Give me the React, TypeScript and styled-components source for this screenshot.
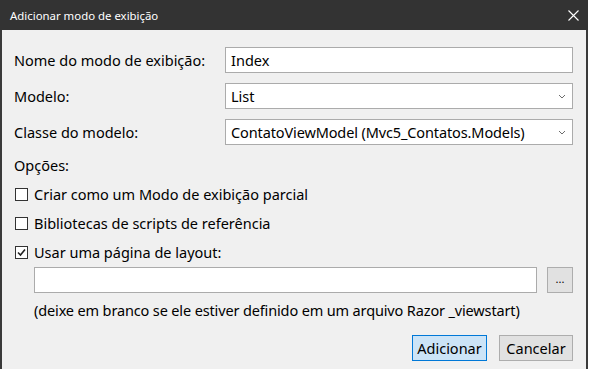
import * as React from 'react';
import styled, { createGlobalStyle } from 'styled-components';

const GlobalStyle = createGlobalStyle`
  html, body {
    margin: 0;
    padding: 0;
    background: #ffffff;
  }
  body {
    font-family: "Noto Sans", "Open Sans", sans-serif;
  }
`

const Window = styled.div`
  width: 588px;
  height: 369px;
  display: flex;
  flex-direction: column;
  background: #f0f0f0;
  box-sizing: border-box;
  overflow: hidden;
`

const TitleBar = styled.div`
  height: 30px;
  flex: 0 0 30px;
  width: 590px;
  background: #333333;
  display: flex;
  align-items: center;
  justify-content: space-between;
  padding: 0 11px 0 10px;
  box-sizing: border-box;
  color: #ffffff;
  font-size: 11.4px;
`

const Body = styled.div`
  flex: 1;
  border-left: 2px solid #3a3a3a;
  border-right: 2px solid #3a3a3a;
  padding: 17px 13px 0 12px;
  display: flex;
  flex-direction: column;
  font-size: 14.5px;
  color: #000000;
`

const FormGrid = styled.div`
  display: grid;
  grid-template-columns: 211px 1fr;
  row-gap: 10px;
  align-items: center;
`

const Label = styled.div`
  line-height: 20px;
`

const Field = styled.div<{ $tight?: boolean }>`
  height: 26px;
  box-sizing: border-box;
  border: 1px solid #ababab;
  background: #ffffff;
  display: flex;
  align-items: center;
  justify-content: space-between;
  padding: 0 6px 0 5px;
  letter-spacing: ${p => (p.$tight ? '-0.12px' : 'normal')};
`

const Chevron = () => (
  <svg width="8" height="5" viewBox="0 0 8 5">
    <path d="M1 1 L4 4 L7 1" fill="none" stroke="#6d6d6d" strokeWidth="1" />
  </svg>
)

const Section = styled.div`
  margin-top: 10px;
  line-height: 20px;
`

const CheckRow = styled.label<{ $top: number }>`
  display: flex;
  align-items: center;
  gap: 6px;
  margin-top: ${p => p.$top}px;
  padding-left: 1px;
  line-height: 20px;
`

const Box = styled.span`
  width: 13px;
  height: 13px;
  box-sizing: border-box;
  border: 1px solid #333333;
  background: #ffffff;
  display: inline-flex;
  align-items: center;
  justify-content: center;
`

const Indented = styled.div`
  padding-left: 20px;
`

const LayoutRow = styled(Indented)`
  display: flex;
  gap: 10px;
  margin-top: 5px;
`

const Hint = styled(Indented)`
  margin-top: 7px;
  line-height: 20px;
  letter-spacing: -0.14px;
`

const Button = styled.div<{ $primary?: boolean }>`
  height: 26px;
  box-sizing: border-box;
  border: 1px solid ${p => (p.$primary ? '#0078d7' : '#adadad')};
  background: ${p => (p.$primary ? '#cce4f7' : '#e1e1e1')};
  display: flex;
  align-items: center;
  justify-content: center;
  width: ${p => (p.$primary ? 75 : 74)}px;
`

const Browse = styled(Button)`
  width: 26px;
  font-size: 11px;
  padding-bottom: 3px;
`

const Buttons = styled.div`
  display: flex;
  justify-content: flex-end;
  gap: 12px;
  margin-top: 15px;
`

const CheckBox = ({ checked }: { checked?: boolean }) => (
  <Box>
    {checked ? (
      <svg width="11" height="11" viewBox="0 0 11 11">
        <path d="M2 5.5 L4.5 8 L9 2.5" fill="none" stroke="#222" strokeWidth="1.6" />
      </svg>
    ) : null}
  </Box>
)

export default function App() {
  return (
    <Window>
      <GlobalStyle />
      <TitleBar>
        <span>Adicionar modo de exibição</span>
        <svg width="11" height="11" viewBox="0 0 11 11">
          <path d="M0.5 0.5 L10.5 10.5 M10.5 0.5 L0.5 10.5" stroke="#ffffff" strokeWidth="1.1" />
        </svg>
      </TitleBar>
      <Body>
        <FormGrid>
          <Label>Nome do modo de exibição:</Label>
          <Field>Index</Field>
          <Label>Modelo:</Label>
          <Field>List<Chevron /></Field>
          <Label>Classe do modelo:</Label>
          <Field $tight>ContatoViewModel (Mvc5_Contatos.Models)<Chevron /></Field>
        </FormGrid>
        <Section>Opções:</Section>
        <CheckRow $top={9}><CheckBox />Criar como um Modo de exibição parcial</CheckRow>
        <CheckRow $top={9}><CheckBox />Bibliotecas de scripts de referência</CheckRow>
        <CheckRow $top={9}><CheckBox checked />Usar uma página de layout:</CheckRow>
        <LayoutRow>
          <Field style={{ flex: 1 }} />
          <Browse>...</Browse>
        </LayoutRow>
        <Hint>(deixe em branco se ele estiver definido em um arquivo Razor _viewstart)</Hint>
        <Buttons>
          <Button $primary>Adicionar</Button>
          <Button>Cancelar</Button>
        </Buttons>
      </Body>
    </Window>
  )
}
